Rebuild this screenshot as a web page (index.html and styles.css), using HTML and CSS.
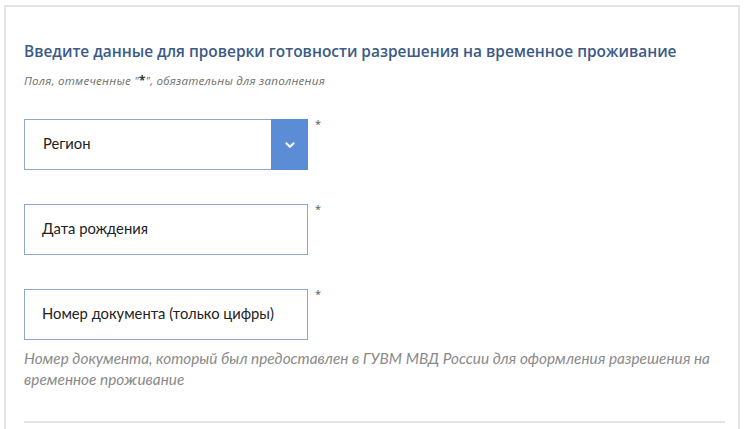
FILE: index.html
```html
<!DOCTYPE html>
<html lang="ru">
<head>
<meta charset="utf-8">
<link rel="stylesheet" href="styles.css">
</head>
<body>
<div class="card">
  <h1 class="title">Введите данные для проверки готовности разрешения на временное проживание</h1>
  <p class="note">Поля, отмеченные "<span class="star">*</span>", обязательны для заполнения</p>
  <div class="fields">
    <div class="row">
      <div class="box select">
        <span class="value">Регион</span>
        <span class="btn">
          <svg width="12" height="8" viewBox="0 0 12 8"><path d="M1.8 1.8 L6 5.8 L10.2 1.8" fill="none" stroke="#fff" stroke-width="2"/></svg>
        </span>
      </div>
      <span class="req">*</span>
    </div>
    <div class="row">
      <div class="box"><span class="value">Дата рождения</span></div>
      <span class="req">*</span>
    </div>
    <div class="row">
      <div class="box"><span class="value">Номер документа (только цифры)</span></div>
      <span class="req">*</span>
    </div>
  </div>
  <p class="help">Номер документа, который был предоставлен в ГУВМ МВД России для оформления разрешения на временное проживание</p>
  <div class="divider"></div>
</div>
</body>
</html>
```
FILE: styles.css
```css
html, body {
  margin: 0;
  padding: 0;
  background: #fff;
}
body {
  font-family: "Open Sans", "Liberation Sans", sans-serif;
}
.card {
  margin: 5px 0 0 4px;
  width: 736px;
  height: 440px;
  border: 2px solid #e4e4e4;
  border-bottom: none;
  padding: 0 0 0 18px;
  box-sizing: border-box;
}
.title {
  margin: 32px 0 0;
  font-size: 15.45px;
  line-height: 24px;
  font-weight: 600;
  color: #3b5a86;
  letter-spacing: 0;
}
.note {
  margin: 10px 0 0;
  font-size: 11.6px;
  line-height: 16px;
  font-style: italic;
  color: #6e6e6e;
  letter-spacing: 0.02em;
}
.star {
  color: #333;
  font-style: normal;
  font-weight: 700;
}
.fields {
  margin-top: 30px;
  display: flex;
  flex-direction: column;
  gap: 34px;
}
.row {
  display: flex;
  align-items: flex-start;
}
.box {
  width: 284px;
  height: 51px;
  box-sizing: border-box;
  border: 1px solid #8ea7cd;
  display: flex;
  align-items: center;
  padding-left: 17px;
  padding-bottom: 3px;
  font-family: Lato, "Open Sans", sans-serif;
  font-size: 14.75px;
  color: #222;
}
.select {
  padding-left: 18px;
  padding-bottom: 0;
}
.select .value {
  padding-bottom: 3px;
}
.value {
  flex: 1;
}
.btn {
  width: 37px;
  height: 51px;
  margin: -1px -1px -1px 0;
  background: #5a8dd6;
  display: flex;
  align-items: center;
  justify-content: center;
}
.req {
  margin: -1px 0 0 7px;
  font-size: 11px;
  line-height: 12px;
  color: #555;
}
.help {
  margin: 8px 0 0;
  font-family: Lato, "Open Sans", sans-serif;
  font-style: italic;
  font-size: 15.35px;
  line-height: 21px;
  color: #8a8a8a;
  width: 700px;
}
.divider {
  margin-top: 31px;
  width: 701px;
  height: 2px;
  background: #e4e4e4;
}
```
